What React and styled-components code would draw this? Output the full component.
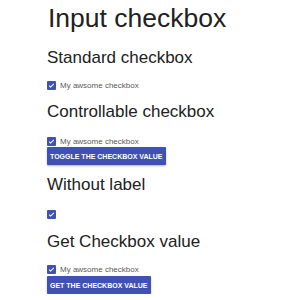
import React, { useState } from "react";
import styled, { createGlobalStyle } from "styled-components";

const Global = createGlobalStyle`
  html, body { margin: 0; padding: 0; background: #fff; }
  body { font-family: "Liberation Sans", Arial, sans-serif; }
`;

const Page = styled.main`
  display: flex;
  flex-direction: column;
  align-items: flex-start;
  padding: 2px 0 0 47px;
  color: #212121;
`;

const Title = styled.h1`
  margin: 0;
  font-size: 26.5px;
  line-height: 32px;
  font-weight: 400;
  margin-left: 1px;
`;

const Heading = styled.h2`
  margin: ${(p) => p.$top}px 0 0;
  font-size: 17px;
  line-height: 20px;
  font-weight: 400;
`;

const Row = styled.label`
  display: flex;
  align-items: center;
  gap: 4px;
  height: 12px;
  margin-top: ${(p) => p.$top}px;
  font-size: 8px;
  color: #5a5a5a;
  cursor: pointer;
`;

const HiddenInput = styled.input`
  position: absolute;
  opacity: 0;
  width: 0;
  height: 0;
  margin: 0;
`;

const Box = styled.span`
  display: flex;
  align-items: center;
  justify-content: center;
  width: 9px;
  height: 9px;
  box-sizing: border-box;
  border-radius: 1px;
  background: ${(p) => (p.$checked ? "#3f51b5" : "#fff")};
  border: ${(p) => (p.$checked ? "none" : "1px solid #757575")};
`;

const Button = styled.button`
  margin-top: ${(p) => p.$top}px;
  height: 18px;
  padding: 0 3px;
  border: none;
  border-radius: 1px;
  background: #3f51b5;
  color: #fff;
  font-family: "Liberation Sans", Arial, sans-serif;
  font-size: 7px;
  font-weight: 700;
  text-transform: uppercase;
  box-shadow: 0 1px 2px rgba(0, 0, 0, 0.3);
  cursor: pointer;
`;

function Checkbox({ checked, onChange, label, top }) {
  return (
    <Row $top={top}>
      <HiddenInput type="checkbox" checked={checked} onChange={onChange} />
      <Box $checked={checked}>
        {checked && (
          <svg width="7" height="7" viewBox="0 0 24 24">
            <path d="M4 12.5l5 5L20 6.5" fill="none" stroke="#fff" strokeWidth="3.6" />
          </svg>
        )}
      </Box>
      {label && <span>{label}</span>}
    </Row>
  );
}

export default function App() {
  const [a, setA] = useState(true);
  const [b, setB] = useState(true);
  const [c, setC] = useState(true);
  const [d, setD] = useState(true);
  return (
    <>
      <Global />
      <Page>
        <Title>Input checkbox</Title>
        <Heading $top={14}>Standard checkbox</Heading>
        <Checkbox top={11} checked={a} onChange={() => setA(!a)} label="My awsome checkbox" />
        <Heading $top={11}>Controllable checkbox</Heading>
        <Checkbox top={13} checked={b} onChange={() => setB(!b)} label="My awsome checkbox" />
        <Button $top={0} onClick={() => setB(!b)}>Toggle the checkbox value</Button>
        <Heading $top={10}>Without label</Heading>
        <Checkbox top={13} checked={c} onChange={() => setC(!c)} />
        <Heading $top={12}>Get Checkbox value</Heading>
        <Checkbox top={11} checked={d} onChange={() => setD(!d)} label="My awsome checkbox" />
        <Button $top={1} onClick={() => alert(d)}>Get the checkbox value</Button>
      </Page>
    </>
  );
}
